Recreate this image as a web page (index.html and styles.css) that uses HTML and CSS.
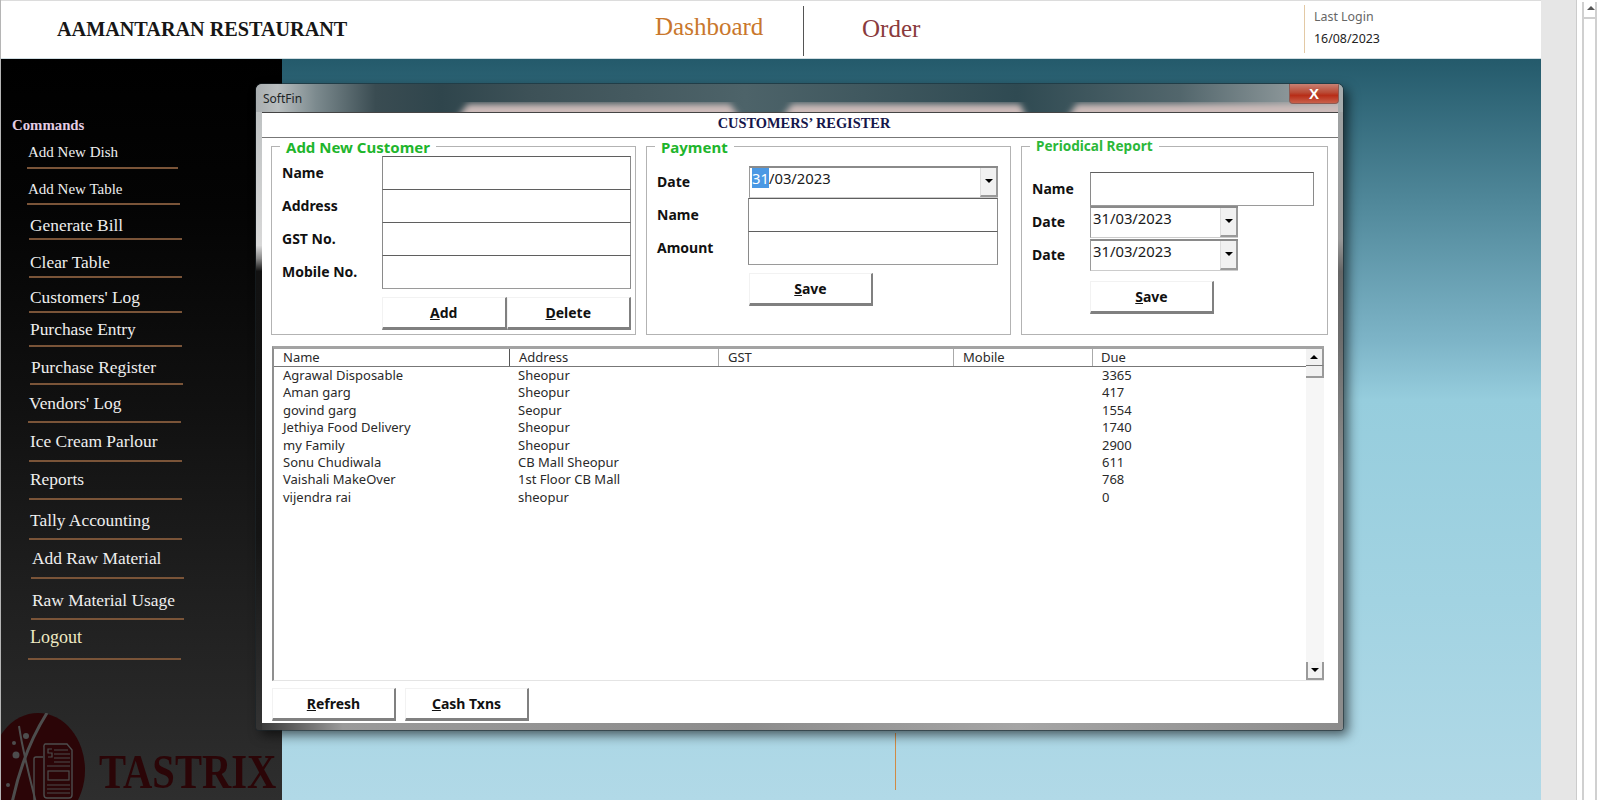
FILE: index.html
```html
<!DOCTYPE html>
<html lang="en">
<head>
<meta charset="utf-8">
<title>Aamantaran Restaurant</title>
<link rel="stylesheet" href="styles.css">
</head>
<body>
<div class="page">
  <div class="main">
    <header class="topbar">
      <h1 class="brand">AAMANTARAN RESTAURANT</h1>
      <nav class="topnav">
        <a class="topnav-dash">Dashboard</a>
        <span class="topnav-sep"></span>
        <a class="topnav-order">Order</a>
      </nav>
      <div class="login">
        <div class="login-label">Last Login</div>
        <div class="login-date">16/08/2023</div>
      </div>
    </header>
    <div class="content">
      <aside class="sidebar">
        <div class="cmd-title">Commands</div>
        <ul class="cmd-list">
          <li>Add New Dish</li>
          <li>Add New Table</li>
          <li>Generate Bill</li>
          <li>Clear Table</li>
          <li>Customers' Log</li>
          <li>Purchase Entry</li>
          <li>Purchase Register</li>
          <li>Vendors' Log</li>
          <li>Ice Cream Parlour</li>
          <li>Reports</li>
          <li>Tally Accounting</li>
          <li>Add Raw Material</li>
          <li>Raw Material Usage</li>
          <li>Logout</li>
        </ul>
        <svg class="logo" viewBox="0 0 90 90" width="90" height="90" aria-hidden="true">
          <ellipse cx="38" cy="57" rx="47" ry="57" fill="#2b0507"/>
          <path d="M47 0C33 22 20 52 12 90" fill="none" stroke="#4d4d4d" stroke-width="3"/>
          <path d="M19 13C23 40 30 65 36 90" fill="none" stroke="#4d4d4d" stroke-width="2"/>
          <circle cx="26" cy="23" r="3" fill="#4d4d4d"/>
          <circle cx="14" cy="30" r="2" fill="#4d4d4d"/>
          <circle cx="16" cy="42" r="3.5" fill="#4d4d4d"/>
          <circle cx="8" cy="72" r="2" fill="#4d4d4d"/>
          <path d="M45 31h22l5 6v45a3 3 0 0 1-3 3H47a3 3 0 0 1-3-3V34a3 3 0 0 1 1-3Z" fill="none" stroke="#4d4d4d" stroke-width="1.4"/>
          <path d="M43 44H36a2 2 0 0 0-2 2V90" fill="none" stroke="#4d4d4d" stroke-width="1.4"/>
          <path d="M54 37h14M54 41h16M54 45h16M54 49h16M47 53h23M47 72h23M47 76h23M47 80h23" stroke="#4d4d4d" stroke-width="1.2"/>
          <rect x="48" y="58" width="21" height="9" fill="none" stroke="#4d4d4d" stroke-width="1.2"/>
          <path d="M52 36h-4v4h4v4h-4" fill="none" stroke="#4d4d4d" stroke-width="1.2"/>
        </svg>
        <div class="logo-text">TASTRIX</div>
      </aside>
      <div class="stage"><span class="stage-line"></span></div>
    </div>
  </div>
  <div class="gutter"></div>
  <div class="pagebar">
    <div class="pagebar-up"><span class="tri-up tri-grey"></span></div>
  </div>
</div>

<section class="dialog">
  <div class="titlebar">
    <svg class="titlebar-art" width="1076" height="28" aria-hidden="true">
      <defs><filter id="soft"><feGaussianBlur stdDeviation="3"/></filter></defs>
      <g filter="url(#soft)" fill="#cdbcba">
        <path d="M195 34L206 20H468L478 34Z"/>
        <path d="M520 34L530 20H758L765 34Z"/>
        <path d="M805 34L815 20H1090V34Z"/>
      </g>
    </svg>
    <span class="titlebar-text">SoftFin</span>
    <span class="close">X</span>
  </div>
  <div class="client">
    <div class="client-head">CUSTOMERS’ REGISTER</div>
    <div class="groups">
      <div class="group group-customer">
        <div class="legend">Add New Customer</div>
        <div class="form form-customer">
          <label>Name</label><div class="input"></div>
          <label>Address</label><div class="input"></div>
          <label>GST No.</label><div class="input"></div>
          <label>Mobile No.</label><div class="input"></div>
          <div class="btn-row btn-pair"><button class="btn"><u>A</u>dd</button><button class="btn"><u>D</u>elete</button></div>
        </div>
      </div>
      <div class="group group-payment">
        <div class="legend">Payment</div>
        <div class="form form-payment">
          <label>Date</label>
          <div class="combo"><span class="combo-text"><span class="sel">31</span>/03/2023</span><span class="combo-btn"><span class="tri-down"></span></span></div>
          <label>Name</label><div class="input input-wide"></div>
          <label>Amount</label><div class="input input-wide"></div>
          <div class="btn-row"><button class="btn btn-solo"><u>S</u>ave</button></div>
        </div>
      </div>
      <div class="group group-report">
        <div class="legend legend-small">Periodical Report</div>
        <div class="form form-report">
          <label>Name</label><div class="input"></div>
          <label>Date</label>
          <div class="combo combo-short"><span class="combo-text">31/03/2023</span><span class="combo-btn"><span class="tri-down"></span></span></div>
          <label>Date</label>
          <div class="combo combo-short"><span class="combo-text">31/03/2023</span><span class="combo-btn"><span class="tri-down"></span></span></div>
          <div class="btn-row btn-row-report"><button class="btn btn-solo"><u>S</u>ave</button></div>
        </div>
      </div>
    </div>
    <div class="listbox">
      <div class="list">
        <div class="row row-head"><span>Name</span><span>Address</span><span>GST</span><span>Mobile</span><span>Due</span></div>
        <div class="row"><span>Agrawal Disposable</span><span>Sheopur</span><span></span><span></span><span>3365</span></div>
        <div class="row"><span>Aman garg</span><span>Sheopur</span><span></span><span></span><span>417</span></div>
        <div class="row"><span>govind garg</span><span>Seopur</span><span></span><span></span><span>1554</span></div>
        <div class="row"><span>Jethiya Food Delivery</span><span>Sheopur</span><span></span><span></span><span>1740</span></div>
        <div class="row"><span>my Family</span><span>Sheopur</span><span></span><span></span><span>2900</span></div>
        <div class="row"><span>Sonu Chudiwala</span><span>CB Mall Sheopur</span><span></span><span></span><span>611</span></div>
        <div class="row"><span>Vaishali MakeOver</span><span>1st Floor CB Mall</span><span></span><span></span><span>768</span></div>
        <div class="row"><span>vijendra rai</span><span>sheopur</span><span></span><span></span><span>0</span></div>
      </div>
      <div class="vscroll">
        <div class="vscroll-btn"><span class="tri-up"></span></div>
        <div class="vscroll-thumb"></div>
        <div class="vscroll-track"></div>
        <div class="vscroll-btn vscroll-btn-down"><span class="tri-down"></span></div>
      </div>
    </div>
    <div class="footer-btns">
      <button class="btn btn-solo"><u>R</u>efresh</button>
      <button class="btn btn-solo"><u>C</u>ash Txns</button>
    </div>
  </div>
</section>
</body>
</html>
```

FILE: styles.css
```css
* { box-sizing: border-box; }
html, body { margin: 0; height: 100%; overflow: hidden; background: #fff; }
body { font-family: "Noto Sans", "Liberation Sans", sans-serif; color: #111; }

.page { display: flex; width: 1600px; height: 800px; }
.main { width: 1541px; display: flex; flex-direction: column; border-left: 1px solid #b5b5b5; }

/* top bar */
.topbar { height: 59px; flex: none; display: flex; align-items: flex-start; background: #fff; border-top: 1px solid #dcdcdc; border-bottom: 1px solid #d0dde2; }
.brand { margin: 15px 0 0 56px; width: 598px; flex: none; font: bold 20.2px/26px "Liberation Serif", serif; color: #161616; }
.topnav { display: flex; align-items: flex-start; flex: none; font: 25px/30px "Liberation Serif", serif; }
.topnav-dash { color: #c9772c; width: 148px; margin-top: 11px; }
.topnav-sep { width: 1px; height: 50px; margin-top: 5px; background: #555; }
.topnav-order { color: #8a3b3d; margin: 13px 0 0 58px; }
.login { margin-left: auto; margin-right: 72px; margin-top: 4px; height: 48px; width: 165px; padding-left: 9px; border-left: 1px solid #e3c9a5; font-size: 12.4px; }
.login-label { color: #666; line-height: 16px; margin-top: 4px; }
.login-date { color: #222; line-height: 16px; margin-top: 6px; }

.content { flex: 1; display: flex; min-height: 0; }

/* sidebar */
.sidebar { width: 281px; flex: none; position: relative; overflow: hidden; padding-top: 56px; background: linear-gradient(#000 0, #040404 20%, #111 48%, #1f1f1f 72%, #2e2e2e 100%); font-family: "Liberation Serif", serif; color: #eee; }
.cmd-title { margin-left: 11px; font-size: 14.8px; font-weight: bold; line-height: 20px; color: #e4cde4; }
.cmd-list { list-style: none; margin: 0; padding: 0; font-size: 17.4px; line-height: 20px; }
.cmd-list li { display: flex; align-items: flex-end; padding-left: 1px; width: 153px; border-bottom: 2px solid #7a5438; white-space: nowrap; }
.cmd-list li:nth-child(1) { height: 34px; margin-left: 26px; width: 151px; font-size: 15px; padding-bottom: 5px; }
.cmd-list li:nth-child(2) { height: 36px; margin-left: 26px; font-size: 15px; padding-bottom: 4px; }
.cmd-list li:nth-child(3) { height: 35px; margin-left: 28px; padding-bottom: 3px; }
.cmd-list li:nth-child(4) { height: 38px; margin-left: 28px; padding-bottom: 4px; }
.cmd-list li:nth-child(5) { height: 35px; margin-left: 28px; padding-bottom: 4px; }
.cmd-list li:nth-child(6) { height: 34px; margin-left: 28px; padding-bottom: 6px; }
.cmd-list li:nth-child(7) { height: 38px; margin-left: 29px; padding-bottom: 6px; }
.cmd-list li:nth-child(8) { height: 38px; margin-left: 27px; padding-bottom: 8px; }
.cmd-list li:nth-child(9) { height: 39px; margin-left: 28px; padding-bottom: 9px; }
.cmd-list li:nth-child(10) { height: 38px; margin-left: 28px; padding-bottom: 9px; }
.cmd-list li:nth-child(11) { height: 40px; margin-left: 28px; padding-bottom: 8px; }
.cmd-list li:nth-child(12) { height: 39px; margin-left: 30px; padding-bottom: 9px; }
.cmd-list li:nth-child(13) { height: 41px; margin-left: 30px; padding-bottom: 8px; }
.cmd-list li:nth-child(14) { height: 40px; margin-left: 27px; padding-bottom: 11px; padding-left: 2px; color: #efeac4; font-size: 18px; }

.logo { position: absolute; left: -1px; top: 654px; }
.logo-text { position: absolute; left: 98px; top: 694px; font-size: 40.6px; line-height: 40px; font-weight: bold; color: #2b0507; transform: scaleY(1.18); }

/* page background */
.stage { flex: 1; position: relative; background: linear-gradient(#245a6b 0, #4f8799 19%, #7db4c7 38%, #96cddd 46%, #a2d3e2 73%, #b1d9e7 100%); }
.stage-line { position: absolute; left: 613px; top: 674px; width: 1px; height: 57px; background: #d08a45; }

.gutter { width: 36px; flex: none; background: #e6e6e6; border-right: 1px solid #ccc; }
.pagebar { flex: 1; padding: 2px 3px 0 5px; background: #fff; }
.pagebar-up { height: 800px; border: 1px solid #d0d0d0; border-width: 0 2px; position: relative; }
.pagebar-up::after { content: ""; position: absolute; left: 0; right: 0; top: 15px; height: 2px; background: #cfcfcf; }
.pagebar-up .tri-up { position: absolute; left: 3px; top: 4px; }
.tri-grey { border-bottom-color: #555 !important; }

/* dialog window */
.dialog { position: absolute; left: 256px; top: 84px; width: 1087px; height: 646px; border-radius: 6px 6px 3px 3px; padding: 0 5px 7px 6px; display: flex; flex-direction: column;
  background:
    linear-gradient(#b9bdbe 0, #d8d8d8 25%, #8a8a8a 27%, #121212 29%, #141414 70%, #333 100%) left top / 6px 100% no-repeat,
    linear-gradient(#a0a4a5 0, #9a9a9a 24%, #666 29%, #6d6d6d 40%, #8c8c8c 60%, #8c8c8c 100%) right top / 5px 100% no-repeat,
    linear-gradient(90deg, #333 0, #9a9a9a 8%, #8c8c8c 45%, #a5a5a5 70%, #8c8c8c 100%);
  box-shadow: 0 0 0 1px rgba(30, 40, 45, .55), 5px 5px 12px rgba(0, 0, 0, .6); }
.titlebar { height: 28px; flex: none; position: relative; margin: 0 -5px 0 -6px; padding-left: 7px; display: flex; align-items: center; border-radius: 6px 6px 0 0; overflow: hidden; background: linear-gradient(90deg, #a9aeb0 0, #b9bebf 2%, #7c8a8e 5.5%, #3a4c52 11%, #2f454c 17%, #3d5157 25%, #4d6369 45%, #2f4a52 70%, #52666c 85%, #a7adae 100%); }
.titlebar-art { position: absolute; left: 6px; top: 0; }
.titlebar-text { position: relative; font-size: 12px; color: #1c2426; }
.close { position: absolute; right: 4px; top: 0; width: 50px; height: 20px; border-radius: 0 0 4px 4px; border: 1px solid #8d5a52; border-top: 0; display: flex; align-items: center; justify-content: center; background: linear-gradient(#c98072 0, #b94a35 45%, #b82d17 60%, #c9604a 100%); color: #fff; font: bold 15px "Liberation Sans", sans-serif; }
.client { flex: 1; display: flex; flex-direction: column; background: #fff; padding-bottom: 2px; min-height: 0; border-top: 1px solid #444; }
.client-head { height: 25px; flex: none; border-bottom: 1px solid #777; padding-left: 8px; text-align: center; font: bold 14.4px/20px "Liberation Serif", serif; color: #15154a; }
.groups { display: flex; gap: 10px; padding: 8px 0 0 9px; flex: none; }
.group { position: relative; height: 189px; border: 1.5px solid #b3b3b3; }
.group-customer, .group-payment { width: 365px; }
.group-report { width: 307px; }
.legend { position: absolute; left: 8px; top: -8px; padding: 0 6px; background: #fff; font-size: 15px; line-height: 16px; font-weight: bold; color: #1eb52c; }
.legend-small { font-size: 13.6px; left: 8px; top: -9px; color: #2cb83a; }

.form { display: grid; grid-auto-rows: 33px; align-items: center; padding-left: 10px; }
.form label { font-size: 14px; font-weight: bold; color: #111; }
.form-customer { grid-template-columns: 100px 249px; padding-top: 9px; }
.form-payment { grid-template-columns: 92px 249px; padding-top: 18px; }
.form-report { grid-template-columns: 58px 224px; padding-top: 25px; }
.input { height: 34px; border: 1px solid #8a8a8a; border-top-color: #5f5f5f; border-bottom-color: #9a9a9a; background: #fff; }
.input-wide { margin-left: -1px; }
.combo { height: 32px; display: flex; justify-content: space-between; border: 1px solid #9a9a9a; border-top: 2px solid #8a8a8a; border-bottom-color: #ccc; border-right: 0; background: #fff; }
.combo-short { width: 148px; }
.combo-text { font-size: 14.8px; line-height: 18px; padding: 1px 0 0 2px; color: #1a1a1a; height: 19px; }
.sel { background: #4a98e4; color: #fff; }
.combo-btn { width: 18px; display: flex; align-items: center; justify-content: center; background: #f1f1f1; border-right: 2px solid #9a9a9a; border-bottom: 2px solid #9a9a9a; border-left: 1px solid #ddd; }
.tri-down, .tri-up { display: block; width: 0; height: 0; border: 4px solid transparent; }
.tri-down { border-top-color: #000; border-bottom-width: 0; }
.tri-up { border-bottom-color: #000; border-top-width: 0; }

.btn-row { grid-column: 2; display: flex; margin-top: 18px; height: 33px; }
.btn-row-report { margin-top: 20px; }
.btn { height: 33px; width: 124px; padding: 0; border: 1px solid #f2f2f2; border-right: 2px solid #808080; border-bottom: 3px solid #808080; background: #fff; font: bold 14px "Noto Sans", sans-serif; color: #111; }
.btn-pair .btn { width: 124.5px; }
.btn-solo { width: 124px; }

/* list */
.listbox { flex: 1; display: flex; margin: 11px 14px 0 10px; min-height: 0; border-top: 3px solid #a3a3a3; border-left: 2px solid #8f8f8f; border-bottom: 1px solid #e4e4e4; }
.list { flex: 1; font-size: 13px; line-height: 17.4px; color: #2a2a2a; }
.row { display: grid; grid-template-columns: 235px 209px 235px 139px 1fr; height: 17.4px; }
.row span { padding-left: 9px; white-space: nowrap; }
.row span:last-child { padding-left: 10px; }
.row-head { height: 18px; border-bottom: 1px solid #777; }
.row-head span:last-child { padding-left: 8px; }
.row-head span:not(:first-child) { border-left: 1px solid #555; }
.row-head span:nth-child(n+3) { border-left-color: #aaa; }
.vscroll { width: 18px; display: flex; flex-direction: column; background: #f6f6f6; }
.vscroll-btn { height: 17px; flex: none; display: flex; align-items: center; justify-content: center; border-right: 2px solid #9a9a9a; border-bottom: 1px solid #777; background: #f2f2f2; }
.vscroll-btn-down { border-bottom: 2px solid #9a9a9a; height: 18px; border-left: 2px solid #9a9a9a; }
.vscroll-thumb { height: 12px; flex: none; background: #f1f1f1; border-right: 2px solid #9a9a9a; border-bottom: 2px solid #9a9a9a; }
.vscroll-track { flex: 1; }
.footer-btns { display: flex; gap: 9px; margin: 7px 0 0 10px; flex: none; }
```
